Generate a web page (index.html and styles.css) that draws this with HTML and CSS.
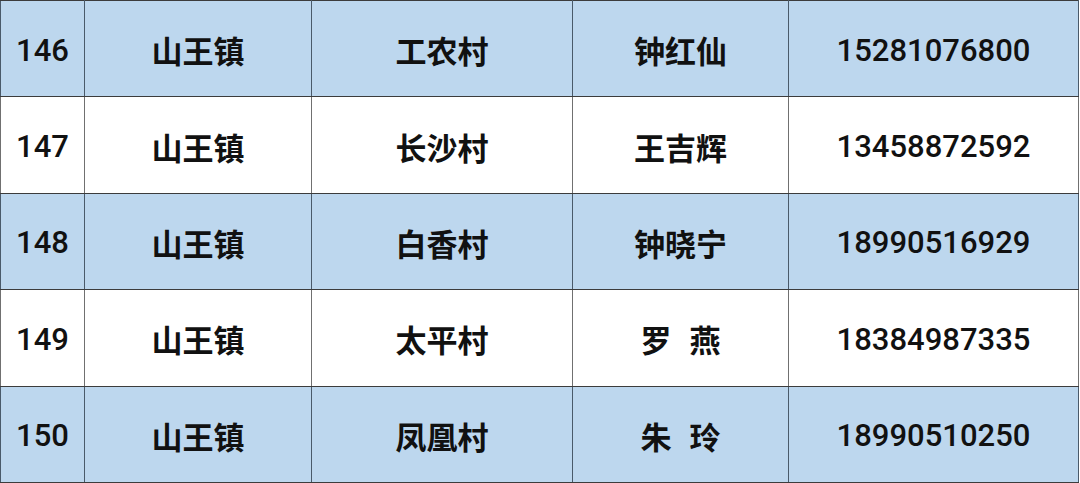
FILE: index.html
```html
<!DOCTYPE html>
<html lang="zh">
<head>
<meta charset="utf-8">
<link rel="stylesheet" href="styles.css">
</head>
<body>
<table class="grid">
  <colgroup>
    <col class="c1"><col class="c2"><col class="c3"><col class="c4"><col class="c5">
  </colgroup>
  <tbody>
    <tr class="blue"><td class="num">146</td><td>山王镇</td><td>工农村</td><td>钟红仙</td><td class="num">15281076800</td></tr>
    <tr><td class="num">147</td><td>山王镇</td><td>长沙村</td><td>王吉辉</td><td class="num">13458872592</td></tr>
    <tr class="blue"><td class="num">148</td><td>山王镇</td><td>白香村</td><td>钟晓宁</td><td class="num">18990516929</td></tr>
    <tr><td class="num">149</td><td>山王镇</td><td>太平村</td><td>罗<span class="gap"></span>燕</td><td class="num">18384987335</td></tr>
    <tr class="blue"><td class="num">150</td><td>山王镇</td><td>凤凰村</td><td>朱<span class="gap"></span>玲</td><td class="num">18990510250</td></tr>
  </tbody>
</table>
</body>
</html>
```
FILE: styles.css
```css
html, body {
  margin: 0;
  padding: 0;
  background: #ffffff;
}
.grid {
  border-collapse: collapse;
  table-layout: fixed;
  width: 1079px;
  height: 483px;
  font-family: "Liberation Sans", "Noto Sans CJK SC", sans-serif;
  font-weight: bold;
  font-size: 31px;
  color: #111111;
}
.c1 { width: 84px; }
.c2 { width: 227px; }
.c3 { width: 261px; }
.c4 { width: 216px; }
.c5 { width: 290px; }
.grid tr { height: 96.4px; }
.grid td {
  border: 1.5px solid #3c3c3c;
  text-align: center;
  vertical-align: middle;
  padding: 2px 0 0 0;
  white-space: nowrap;
}
.grid td.num {
  font-family: "Roboto", "Liberation Sans", sans-serif;
  font-weight: 500;
  font-size: 31px;
  padding-top: 3px;
}
.grid tr:not(.blue) td {
  border-left-color: #707070;
  border-right-color: #707070;
}
.grid tr.blue td {
  background: #bdd7ee;
  border-left-color: #4a5a6a;
  border-right-color: #4a5a6a;
}
.gap {
  display: inline-block;
  width: 18px;
}
```
